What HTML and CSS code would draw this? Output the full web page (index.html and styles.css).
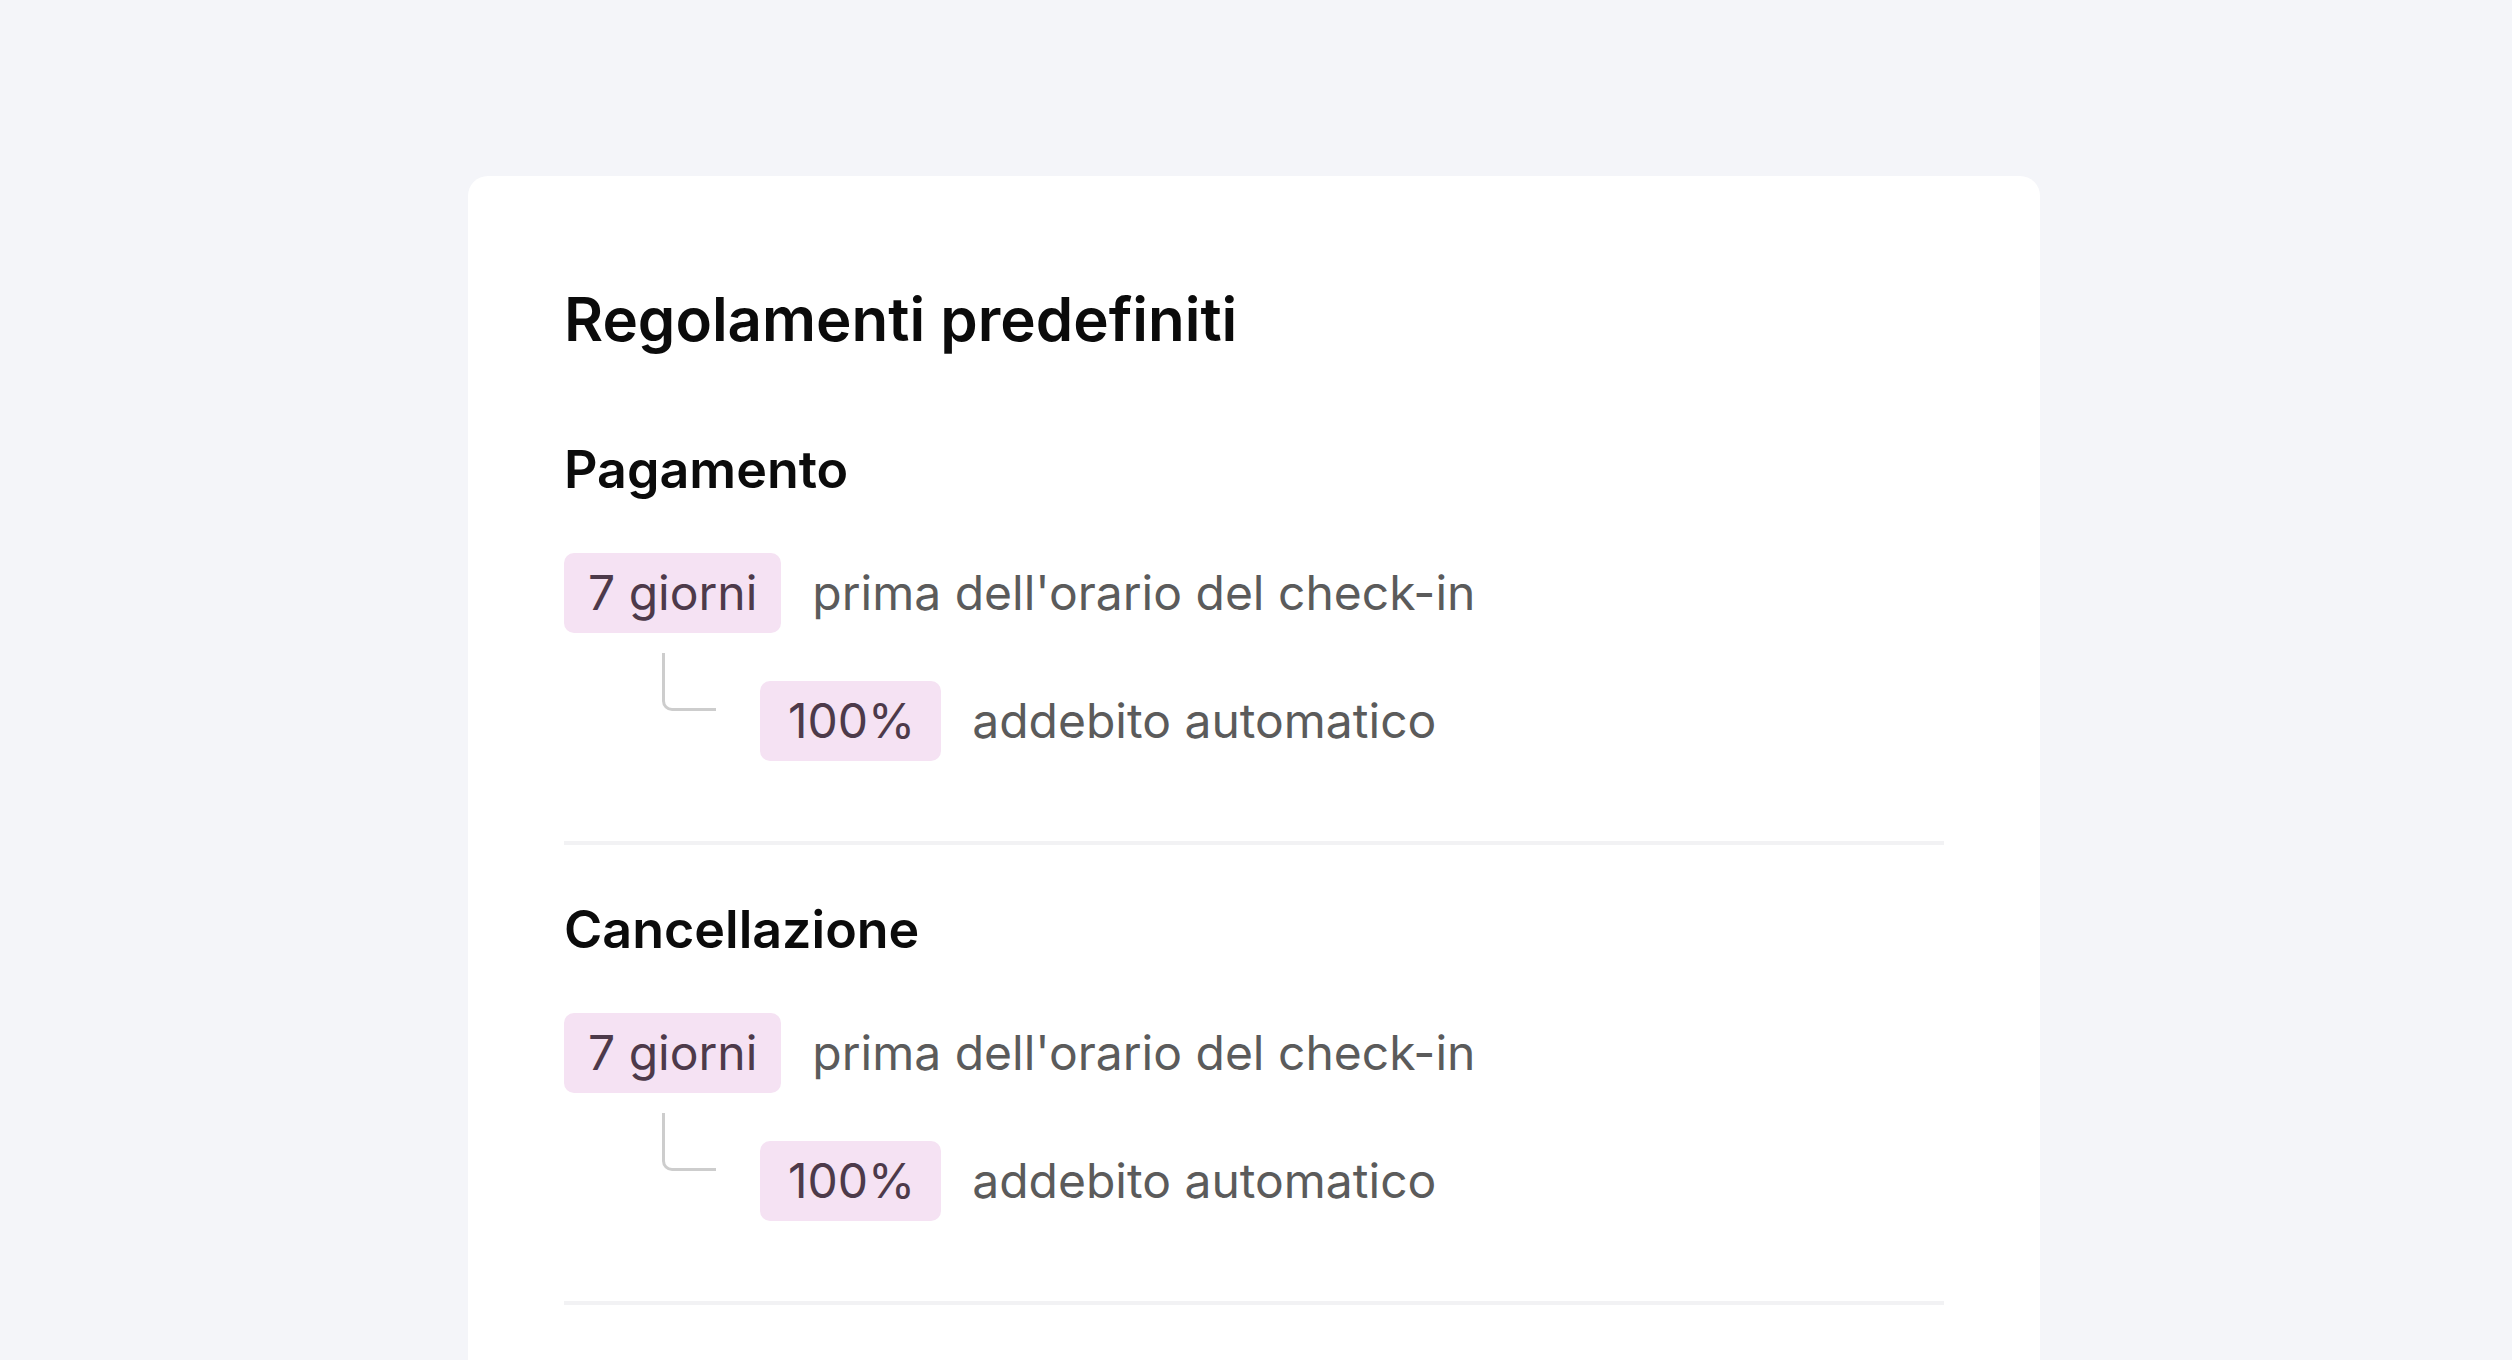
FILE: index.html
```
<!doctype html>
<html>
<head>
<meta charset="UTF-8">
<title>Regolamenti predefiniti</title>
<link rel="stylesheet" href="styles.css">
</head>
<body>
<div class="card">
    <h1 class="card-title">Regolamenti predefiniti</h1>

    <div class="rule">
        <h2 class="rule-title">Pagamento</h2>
        <div class="step">
            <span class="tag">7 giorni</span>
            <span class="step-text">prima dell'orario del check-in</span>
        </div>
        <div class="step step-sub">
            <span class="branch"></span>
            <span class="tag tag-pct">100%</span>
            <span class="step-text">addebito automatico</span>
        </div>
    </div>

    <div class="rule">
        <h2 class="rule-title">Cancellazione</h2>
        <div class="step">
            <span class="tag">7 giorni</span>
            <span class="step-text">prima dell'orario del check-in</span>
        </div>
        <div class="step step-sub">
            <span class="branch"></span>
            <span class="tag tag-pct">100%</span>
            <span class="step-text">addebito automatico</span>
        </div>
    </div>
</div>
</body>
</html>
```

FILE: styles.css
```
html,body,h1,h2,div{margin:0;padding:0;}
html,body{height:100%;overflow:hidden;}
body{background:#f4f5f9;font-family:Inter,"Noto Sans",sans-serif;color:#0b0b0b;}

/* scheda centrale */
.card{width:1572px;min-height:1400px;margin:176px 0 0 calc(50% - 788px);padding:96px 96px 0;box-sizing:border-box;background:#fff;border-radius:20px 20px 0 0;}
.card-title{font-size:60px;line-height:94px;font-weight:600;margin-bottom:72px;}

/* blocco regola: titolo + passaggi */
.rule{padding-bottom:80px;border-bottom:4px solid #f2f2f4;}
.rule + .rule{padding-top:53px;}
.rule-title{font-size:52px;line-height:64px;font-weight:600;margin-bottom:51px;}

.step{display:flex;align-items:center;}
.step-sub{margin-top:48px;padding-left:98px;}
.tag{padding:12px 24px;font-size:48px;line-height:56px;color:#4d3a4a;background:#f5e2f3;border-radius:10px;}
.tag-pct{padding:12px 26px 12px 28px;}
.step-text{margin-left:31px;font-size:48px;line-height:56px;color:#5b5b5b;}

/* linea ad angolo verso il sotto-passaggio */
.branch{align-self:flex-start;flex:none;width:54px;height:58px;margin-top:-28px;margin-right:44px;box-sizing:border-box;border-left:3px solid #cdcdcd;border-bottom:3px solid #cdcdcd;border-bottom-left-radius:10px;}
```
